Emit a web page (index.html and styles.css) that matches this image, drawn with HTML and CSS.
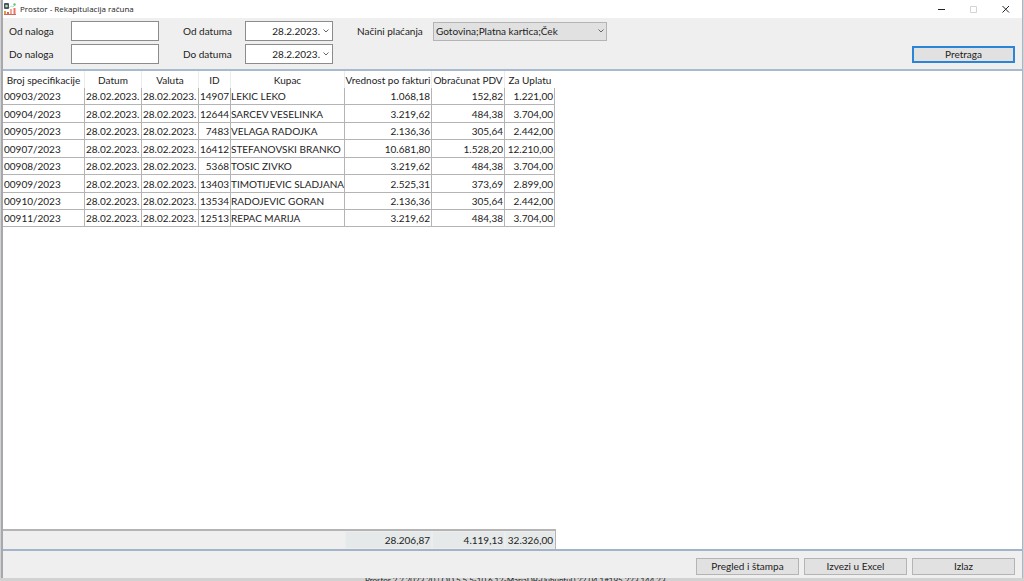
FILE: index.html
```html
<!DOCTYPE html>
<html lang="sr-Latn">
<head>
  <meta charset="UTF-8">
  <meta name="viewport" content="width=device-width, initial-scale=1.0">
  <title>Prostor - Rekapitulacija računa</title>
  <link rel="stylesheet" href="styles.css">
</head>
<body>

  <div class="window">
    <header class="title-bar">
      <svg class="app-icon" viewBox="0 0 12 12" aria-hidden="true">
        <rect x="0" y="0" width="5" height="6" rx="1" fill="#46545c"/>
        <circle cx="2.500" cy="3" r="1.300" fill="#b9d7c4"/>
        <path d="M5 5l2-2 2 1 2-2" fill="none" stroke="#a8dcae" stroke-width=".8"/>
        <circle cx="10.500" cy="1.500" r="1.200" fill="#5ccb76"/>
        <path d="M0 8h2v3H0z" fill="#d9a03c"/>
        <path d="M3 9h2v2H3z" fill="#e2604f"/>
        <path d="M6 6h2v5H6z" fill="#f3a79c"/>
        <path d="M9.500 5h2v6h-2z" fill="#ec7468"/>
        <path d="M0 11h12v1H0z" fill="#c9685c"/>
      </svg>
      <h1>Prostor - Rekapitulacija računa</h1>
      <div class="window-buttons">
        <button type="button" aria-label="Minimize">
          <svg viewBox="0 0 8 8"><path d="M0 4.500h7" stroke="#222"/></svg>
        </button>
        <button type="button" aria-label="Maximize" disabled>
          <svg viewBox="0 0 8 8"><path d="M.5 1.500h6v6h-6z" stroke="#d4d4d4"/></svg>
        </button>
        <button type="button" aria-label="Close">
          <svg viewBox="0 0 8 8"><path d="M.5 1l6.500 6.500M7 1L.5 7.500" stroke="#222"/></svg>
        </button>
      </div>
    </header>

    <form class="filters">
      <div class="fields">
        <label for="orderFrom">Od naloga</label>
        <input type="text" id="orderFrom" class="box">
        <label for="dateFrom" class="indent">Od datuma</label>
        <div class="box date">
          <input type="text" id="dateFrom" value="28.2.2023.">
          <button type="button" aria-label="Izaberi datum od">
            <svg class="chevron" viewBox="0 0 6 4"><path d="M.5.5L3 3 5.500.5"/></svg>
          </button>
        </div>
        <label for="payment" class="indent">Načini plaćanja</label>
        <div class="payment">
          <select id="payment">
            <option>Gotovina;Platna kartica;Ček</option>
          </select>
          <svg class="chevron" viewBox="0 0 6 4"><path d="M.5.5L3 3 5.500.5"/></svg>
        </div>

        <label for="orderTo">Do naloga</label>
        <input type="text" id="orderTo" class="box">
        <label for="dateTo" class="indent">Do datuma</label>
        <div class="box date">
          <input type="text" id="dateTo" value="28.2.2023.">
          <button type="button" aria-label="Izaberi datum do">
            <svg class="chevron" viewBox="0 0 6 4"><path d="M.5.5L3 3 5.500.5"/></svg>
          </button>
        </div>
      </div>
      <button type="button" class="btn btn-default">Pretraga</button>
    </form>

    <main class="grid">
      <table class="invoices">
        <colgroup>
          <col class="c-spec"><col class="c-date"><col class="c-date"><col class="c-id">
          <col class="c-name"><col class="c-value"><col class="c-tax"><col class="c-total">
        </colgroup>
        <thead>
          <tr>
            <th>Broj specifikacije</th>
            <th>Datum</th>
            <th>Valuta</th>
            <th>ID</th>
            <th>Kupac</th>
            <th>Vrednost po fakturi</th>
            <th>Obračunat PDV</th>
            <th>Za Uplatu</th>
          </tr>
        </thead>
        <tbody>
          <tr><td>00903/2023</td><td>28.02.2023.</td><td>28.02.2023.</td><td class="num">14907</td><td class="name">LEKIC LEKO</td><td class="num">1.068,18</td><td class="num">152,82</td><td class="num">1.221,00</td></tr>
          <tr><td>00904/2023</td><td>28.02.2023.</td><td>28.02.2023.</td><td class="num">12644</td><td class="name">SARCEV VESELINKA</td><td class="num">3.219,62</td><td class="num">484,38</td><td class="num">3.704,00</td></tr>
          <tr><td>00905/2023</td><td>28.02.2023.</td><td>28.02.2023.</td><td class="num">7483</td><td class="name">VELAGA RADOJKA</td><td class="num">2.136,36</td><td class="num">305,64</td><td class="num">2.442,00</td></tr>
          <tr><td>00907/2023</td><td>28.02.2023.</td><td>28.02.2023.</td><td class="num">16412</td><td class="name">STEFANOVSKI BRANKO</td><td class="num">10.681,80</td><td class="num">1.528,20</td><td class="num">12.210,00</td></tr>
          <tr><td>00908/2023</td><td>28.02.2023.</td><td>28.02.2023.</td><td class="num">5368</td><td class="name">TOSIC ZIVKO</td><td class="num">3.219,62</td><td class="num">484,38</td><td class="num">3.704,00</td></tr>
          <tr><td>00909/2023</td><td>28.02.2023.</td><td>28.02.2023.</td><td class="num">13403</td><td class="name">TIMOTIJEVIC SLADJANA</td><td class="num">2.525,31</td><td class="num">373,69</td><td class="num">2.899,00</td></tr>
          <tr><td>00910/2023</td><td>28.02.2023.</td><td>28.02.2023.</td><td class="num">13534</td><td class="name">RADOJEVIC GORAN</td><td class="num">2.136,36</td><td class="num">305,64</td><td class="num">2.442,00</td></tr>
          <tr><td>00911/2023</td><td>28.02.2023.</td><td>28.02.2023.</td><td class="num">12513</td><td class="name">REPAC MARIJA</td><td class="num">3.219,62</td><td class="num">484,38</td><td class="num">3.704,00</td></tr>
        </tbody>
      </table>

      <table class="totals">
        <colgroup>
          <col class="c-spec"><col class="c-date"><col class="c-date"><col class="c-id">
          <col class="c-name"><col class="c-value"><col class="c-tax"><col class="c-total">
        </colgroup>
        <tbody>
          <tr><td colspan="5"></td><td class="sum">28.206,87</td><td class="sum">4.119,13</td><td class="sum">32.326,00</td></tr>
        </tbody>
      </table>
    </main>

    <footer class="actions">
      <button type="button" class="btn">Pregled i štampa</button>
      <button type="button" class="btn">Izvezi u Excel</button>
      <button type="button" class="btn">Izlaz</button>
    </footer>
  </div>

  <!-- status line of the main window, mostly covered by this one -->
  <div class="status"><span>Prostor 2.2.2023.20 | OD 5.5.5-10.6.12-MariaDB-0ubuntu0.22.04.1#195.223.144.23</span></div>

</body>
</html>
```

FILE: styles.css
```css
* {
  box-sizing: border-box;
}
body {
  margin: 0;
  height: 100vh;
  display: flex;
  flex-direction: column;
  background: #d2d2d2;
  color: #222;
  font-family: Lato, "Open Sans", sans-serif;
  font-size: 10px;
  line-height: 16px;
}
button, input, select {
  margin: 0;
  font: inherit;
  color: inherit;
}
.window {
  flex: 1;
  min-height: 0;
  display: flex;
  flex-direction: column;
  margin: 0 1px;
  border-left: 2px solid #a6a8ac;
  border-right: 1px solid #a9b6c4;
  background: #efefef;
}

/* title bar */
.title-bar {
  display: flex;
  align-items: center;
  height: 18px;
  padding-left: 1px;
  background: #fff;
}
.app-icon {
  width: 12px;
  height: 12px;
  margin-right: 4px;
}
h1 {
  margin: 0;
  font-family: "Open Sans", sans-serif;
  font-size: 8px;
  font-weight: normal;
}
.window-buttons {
  display: flex;
  margin-left: auto;
}
.window-buttons button {
  display: flex;
  align-items: center;
  justify-content: center;
  width: 32px;
  height: 18px;
  padding: 0;
  border: none;
  background: none;
}
.window-buttons svg {
  width: 8px;
  height: 8px;
  fill: none;
}

/* filters */
.filters {
  display: flex;
  justify-content: space-between;
  align-items: flex-end;
  height: 51px;
  padding: 3px 7px 5px 6px;
}
.fields {
  display: grid;
  grid-template-columns: 62px 88px 86px 88px 100px 174px;
  row-gap: 3px;
  align-items: center;
  white-space: nowrap;
}
.fields .indent {
  padding-left: 24px;
}
.box {
  width: 100%;
  height: 20px;
  border: 1px solid #8c8c8c;
  background: #fff;
}
.date {
  display: flex;
}
.date input {
  flex: 1;
  min-width: 0;
  padding: 0;
  border: none;
  background: none;
  text-align: right;
}
.date button {
  display: flex;
  align-items: center;
  justify-content: center;
  width: 12px;
  padding: 0;
  border: none;
  background: none;
}
.chevron {
  width: 6px;
  height: 4px;
  fill: none;
  stroke: #666;
}
.payment {
  display: grid;
  align-items: center;
}
.payment select, .payment .chevron {
  grid-area: 1 / 1;
}
.payment .chevron {
  justify-self: end;
  margin-right: 3px;
  pointer-events: none;
}
.payment select {
  appearance: none;
  width: 100%;
  height: 19px;
  padding: 0 2px;
  border: 1px solid #b4b4b4;
  border-radius: 0;
  background: #e1e1e1;
}
.btn {
  width: 103px;
  height: 17px;
  padding: 0;
  border: 1px solid #b4b4b4;
  background: #e1e1e1;
  line-height: 15px;
}
.btn-default {
  margin-bottom: 1px;
  border: 2px solid #2a84d8;
  line-height: 13px;
}

/* data grid */
.grid {
  flex: 1;
  min-height: 0;
  display: flex;
  flex-direction: column;
  justify-content: space-between;
  border-top: 2px solid #a7bace;
  border-bottom: 2px solid #a2b4c9;
  background: #fff;
}
table {
  width: 552px;
  table-layout: fixed;
  border-collapse: separate;
  border-spacing: 0;
}
.c-spec { width: 82px; }
.c-date { width: 57px; }
.c-id { width: 32px; }
.c-name { width: 114px; }
.c-value { width: 87px; }
.c-tax { width: 73px; }
.c-total { width: 50px; }
th, td {
  padding: 0 1px;
  white-space: nowrap;
  line-height: 16px;
}
th {
  height: 17px;
  padding: 0;
  border-right: 1px solid #ececec;
  font-weight: normal;
  text-align: center;
}
.invoices td {
  height: 17px;
  border-right: 1px solid #b4b4b4;
  border-bottom: 1px solid #b4b4b4;
}
.invoices tbody tr:nth-child(even):not(:last-child) td {
  height: 18px;
}
th:last-child {
  border-right: none;
}
.invoices .name {
  padding: 0;
}
.num {
  text-align: right;
}
.totals {
  border-top: 2px solid #b4b4b4;
  border-right: 1px solid #b4b4b4;
  background: #efefef;
}
.totals td {
  height: 18px;
}
.totals .sum {
  border: 1px solid #eceeee;
  background: #e5e9e9;
  text-align: right;
}

/* bottom buttons */
.actions {
  display: flex;
  justify-content: flex-end;
  gap: 5px;
  padding: 7px 7px 3px;
}
.status {
  display: flex;
  align-items: center;
  height: 3px;
  padding-left: 365px;
  overflow: hidden;
  font-size: 8px;
  line-height: 8px;
  white-space: nowrap;
}
```
